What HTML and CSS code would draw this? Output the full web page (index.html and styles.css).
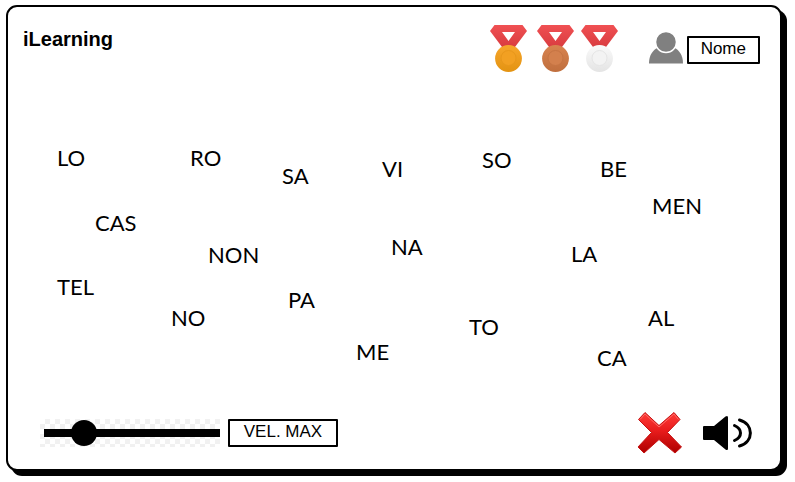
FILE: index.html
```html
<!DOCTYPE html>
<html lang="it">
<head>
<meta charset="utf-8">
<meta name="viewport" content="width=device-width, initial-scale=1">
<title>iLearning</title>
<link rel="stylesheet" href="styles.css">
</head>
<body>
<main class="card">
  <header class="header">
    <h1 class="brand">iLearning</h1>
    <svg class="medals" viewBox="0 0 129 48" role="img" aria-label="Medaglie">
      <defs>
        <linearGradient id="ribbon" x1="0" y1="0" x2="0" y2="1"><stop offset="0" stop-color="#f05053"/><stop offset="1" stop-color="#d93c40"/></linearGradient>
        <linearGradient id="gold" x1="0" y1="0" x2="0" y2="1"><stop offset="0" stop-color="#f7a62b"/><stop offset="1" stop-color="#e39312"/></linearGradient>
        <linearGradient id="bronze" x1="0" y1="0" x2="0" y2="1"><stop offset="0" stop-color="#d8834f"/><stop offset="1" stop-color="#c06f3e"/></linearGradient>
        <linearGradient id="silver" x1="0" y1="0" x2="0" y2="1"><stop offset="0" stop-color="#fafafa"/><stop offset="1" stop-color="#e4e4e4"/></linearGradient>
        <path id="strap" fill="url(#ribbon)" fill-rule="evenodd" d="M4.500 0H32.500L37 6L25 22H12L0 6ZM12 7L18.500 16L25 7Z"/>
      </defs>
      <g>
        <use href="#strap"/>
        <circle cx="18.500" cy="33.500" r="13.400" fill="url(#gold)"/>
        <circle cx="18.500" cy="33" r="7.500" fill="#f2a022" stroke="#e8971b"/>
      </g>
      <g transform="translate(47 0)">
        <use href="#strap"/>
        <circle cx="18.500" cy="33.500" r="13.400" fill="url(#bronze)"/>
        <circle cx="18.500" cy="33" r="7.500" fill="#d3804d" stroke="#c67443"/>
      </g>
      <g transform="translate(91 0)">
        <use href="#strap"/>
        <circle cx="18.500" cy="33.500" r="13.400" fill="url(#silver)"/>
        <circle cx="18.500" cy="33" r="7.500" fill="#f3f3f3" stroke="#e5e5e5"/>
      </g>
    </svg>
    <div class="user">
      <svg class="avatar" viewBox="0 0 34 32" aria-hidden="true">
        <path d="M0 31.500C0 23 4 18 9 15.500H25C30 18 34 23 34 31.500Z" fill="#808080"/>
        <circle cx="17" cy="10" r="10.500" fill="#808080" stroke="#fff" stroke-width="1.500"/>
      </svg>
      <button class="box" type="button">Nome</button>
    </div>
  </header>

  <section class="board" aria-label="Sillabe">
    <span class="word w-lo">LO</span>
    <span class="word w-ro">RO</span>
    <span class="word w-sa">SA</span>
    <span class="word w-vi">VI</span>
    <span class="word w-so">SO</span>
    <span class="word w-be">BE</span>
    <span class="word w-men">MEN</span>
    <span class="word w-cas">CAS</span>
    <span class="word w-non">NON</span>
    <span class="word w-na">NA</span>
    <span class="word w-la">LA</span>
    <span class="word w-tel">TEL</span>
    <span class="word w-no">NO</span>
    <span class="word w-pa">PA</span>
    <span class="word w-me">ME</span>
    <span class="word w-to">TO</span>
    <span class="word w-ca">CA</span>
    <span class="word w-al">AL</span>
  </section>

  <footer class="footer">
    <div class="speed">
      <input class="slider" type="range" min="0" max="100" value="18" aria-label="Velocità">
    </div>
    <button class="box box-speed" type="button">VEL. MAX</button>
    <div class="actions">
      <button class="icon-button" type="button" aria-label="Chiudi">
        <svg class="cross" viewBox="0 0 46 44" aria-hidden="true">
          <defs><linearGradient id="red" x1="0" y1="0" x2="0" y2="1"><stop offset="0" stop-color="#ff3b38"/><stop offset=".45" stop-color="#e81c1c"/><stop offset="1" stop-color="#ad0000"/></linearGradient></defs>
          <path d="M8 1.500L22 14.500L37 1.500L43 8.500L30.500 21.500L44.500 36L38 42L22 28.500L7 42L1 36L14.500 21.500L1.500 8.500Z" fill="url(#red)" stroke="#c51212" stroke-linejoin="round"/>
          <path d="M3 8.500L8 3L22 16L37 3L41.500 8.500" fill="none" stroke="#ff6a66"/>
        </svg>
      </button>
      <button class="icon-button" type="button" aria-label="Audio">
        <svg class="speaker" viewBox="0 0 50 36" aria-hidden="true">
          <path d="M1 11H11L22.500 1.500Q25 0 25 2.500V33.500Q25 36 22.500 34.500L11 25H1Q0 25 0 24V12Q0 11 1 11Z"/>
          <path d="M31.500 10.500C39.500 14 39.500 22 31.500 25.500M36.500 5C51 9 51 27 36.500 31" fill="none" stroke="#000" stroke-width="3" stroke-linecap="round"/>
        </svg>
      </button>
    </div>
  </footer>
</main>
</body>
</html>
```
FILE: styles.css
```css
* { box-sizing: border-box; }

body {
  margin: 0;
  min-height: 100vh;
  padding: 5px 13px 11px 6px;
  display: flex;
  background: #fff;
  color: #000;
  font-family: "Liberation Sans", Arial, sans-serif;
}

.card {
  flex: 1;
  display: flex;
  flex-direction: column;
  border: 2px solid #000;
  border-radius: 11px;
  background: #fff;
  box-shadow: 5px 5px 0 #000;
}

.header {
  display: flex;
  align-items: flex-start;
  padding: 18px 20px 0 15px;
}

.brand {
  flex: 1;
  margin: 2px 0 0;
  font-size: 20px;
  line-height: 24px;
}

.medals {
  width: 129px;
  height: 48px;
  margin-right: 30px;
}

.user {
  display: flex;
  align-items: flex-end;
  gap: 4px;
  padding-top: 7px;
}

.avatar {
  width: 34px;
  height: 32px;
}

.box {
  min-width: 73px;
  height: 28px;
  padding: 0 12px 2px;
  border: 2px solid #000;
  border-radius: 1px;
  background: #fff;
  color: #000;
  font: 17px/22px "Liberation Sans", Arial, sans-serif;
}

.board {
  position: relative;
  flex: 1;
  min-height: 320px;
}

.word {
  position: absolute;
  font: 22px/22px Lato, sans-serif;
}

.w-lo { left: 49px; top: 74px; }
.w-ro { left: 182px; top: 74px; }
.w-sa { left: 274px; top: 92px; }
.w-vi { left: 374px; top: 85px; }
.w-so { left: 474px; top: 76px; }
.w-be { left: 592px; top: 85px; }
.w-men { left: 644px; top: 122px; }
.w-cas { left: 87px; top: 139px; }
.w-non { left: 200px; top: 171px; }
.w-na { left: 383px; top: 163px; }
.w-la { left: 563px; top: 170px; }
.w-tel { left: 49px; top: 203px; }
.w-no { left: 163px; top: 234px; }
.w-pa { left: 280px; top: 216px; }
.w-me { left: 348px; top: 268px; }
.w-to { left: 461px; top: 243px; }
.w-ca { left: 589px; top: 274px; }
.w-al { left: 640px; top: 234px; }

.footer {
  display: flex;
  align-items: center;
  padding: 0 27px 14px 32px;
}

.speed {
  display: flex;
  align-items: center;
  width: 180px;
  height: 28px;
  margin-right: 8px;
  padding-left: 4px;
  background: repeating-conic-gradient(#f1f1f1 0 25%, #fff 0 50%) 0 0 / 10px 10px;
}

.slider {
  appearance: none;
  width: 100%;
  height: 28px;
  margin: 0;
  background: transparent;
}

.slider::-webkit-slider-runnable-track {
  height: 8px;
  background: #000;
}

.slider::-webkit-slider-thumb {
  appearance: none;
  width: 26px;
  height: 26px;
  margin-top: -9px;
  border-radius: 50%;
  background: #000;
}

.box-speed {
  min-width: 110px;
}

.actions {
  display: flex;
  align-items: center;
  gap: 20px;
  margin-left: auto;
}

.icon-button {
  display: flex;
  padding: 0;
  border: 0;
  background: none;
}

.cross {
  width: 46px;
  height: 44px;
}

.speaker {
  width: 50px;
  height: 36px;
}
```
